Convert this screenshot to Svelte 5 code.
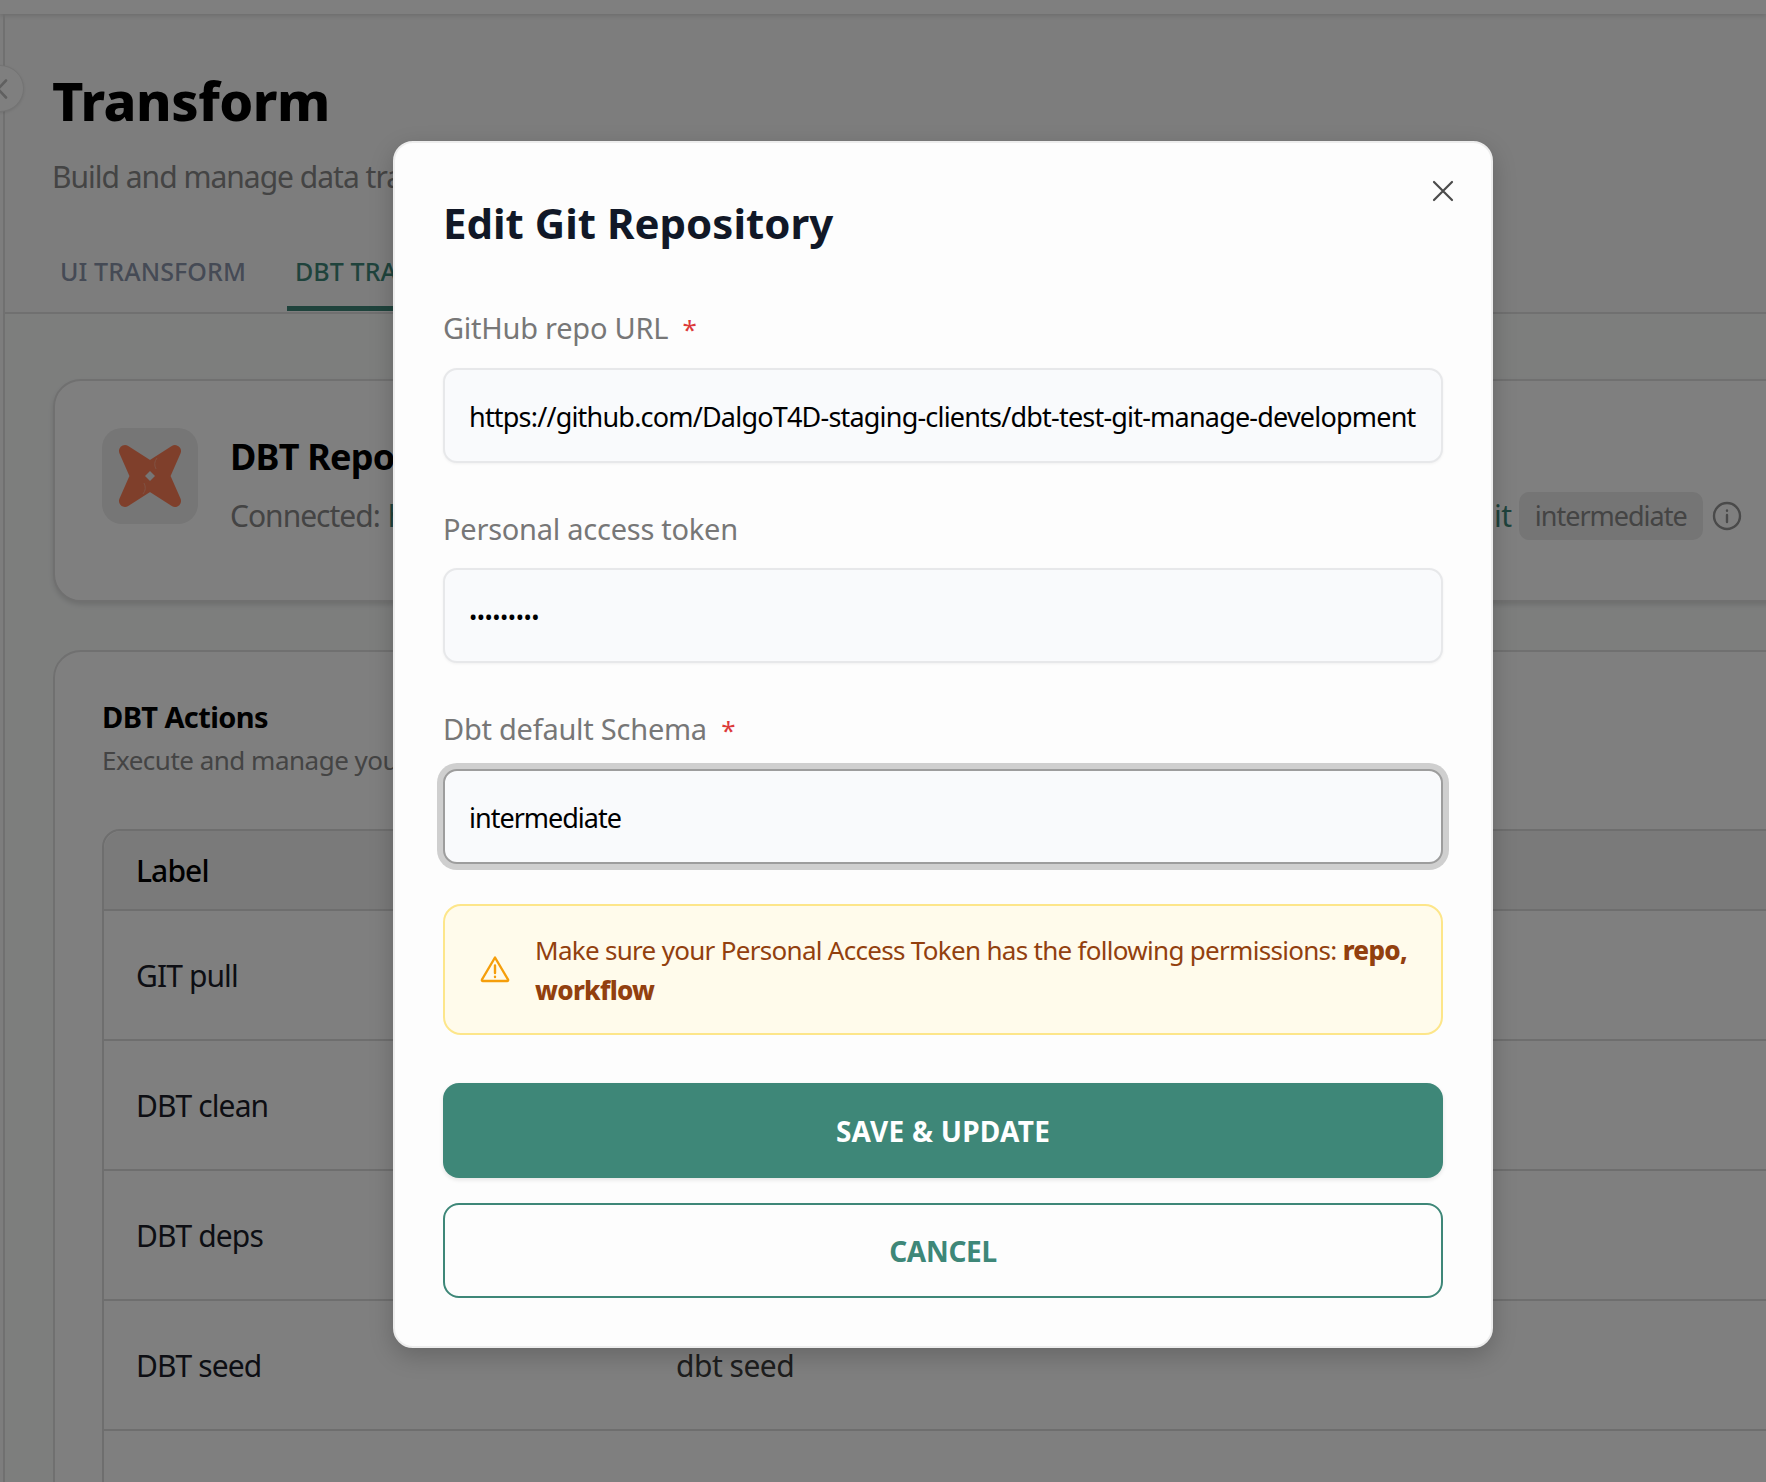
<script>
  const rows = [
    { label: 'GIT pull', command: 'git pull' },
    { label: 'DBT clean', command: 'dbt clean' },
    { label: 'DBT deps', command: 'dbt deps' },
    { label: 'DBT seed', command: 'dbt seed' },
    { label: '', command: '' }
  ];
</script>

<div class="screen">
  <div class="topbar"></div>
  <div class="body">
    <aside class="rail">
      <span class="collapse">
        <svg viewBox="0 0 24 24" width="24" height="24" fill="none" stroke="#c0c0c0" stroke-width="2.6" stroke-linecap="round" stroke-linejoin="round"><path d="M16 3.5L8 12l8 8.5" /></svg>
      </span>
    </aside>
    <main class="main">
      <header class="head">
        <h1>Transform</h1>
        <p>Build and manage data transformations</p>
      </header>
      <nav class="tabs">
        <span class="tab">UI TRANSFORM</span>
        <span class="tab active">DBT TRANSFORM</span>
      </nav>
      <section class="content">
        <div class="card repo">
          <div class="logo">
            <svg viewBox="0 0 64 64" width="64" height="64">
              <path d="M7 7L32 23L57 7L46 32L57 57L32 41L7 57L18 32Z" fill="#ff7f57" stroke="#ff7f57" stroke-width="12" stroke-linejoin="round" />
              <path d="M32 27l5 5-5 5-5-5z" fill="#ececec" />
              <path d="M39 14q-4 5-1 11M25 50q4-5 1-11" fill="none" stroke="#ffa284" stroke-width="1" />
            </svg>
          </div>
          <div class="repo-text">
            <h2>DBT Repo</h2>
            <div class="conn">
              <span class="conn-label">Connected:</span>
              <a class="conn-link">https://github.com/DalgoT4D-staging-clients/dbt-test-git-manage-development.git</a>
              <span class="chip">intermediate</span>
              <svg class="info" viewBox="0 0 30 30" width="30" height="30" fill="none" stroke="#949494" stroke-width="2.4" stroke-linecap="round"><circle cx="15" cy="15" r="13" /><path d="M15 14v7" /><path d="M15 9.5v.2" /></svg>
            </div>
          </div>
        </div>
        <div class="card actions">
          <h3>DBT Actions</h3>
          <p class="sub">Execute and manage your dbt commands</p>
          <div class="table">
            <div class="row thead"><span>Label</span><span></span></div>
            {#each rows as r}
              <div class="row"><span class="lbl">{r.label}</span><span class="cmd">{r.command}</span></div>
            {/each}
          </div>
        </div>
      </section>
    </main>
  </div>

  <div class="backdrop"></div>

  <div class="modal" role="dialog">
    <button class="close" aria-label="Close">
      <svg viewBox="0 0 22 22" width="22" height="22" fill="none" stroke="#4b4b4b" stroke-width="2.2" stroke-linecap="round"><path d="M2 2l18 18M20 2L2 20" /></svg>
    </button>
    <h2 class="title">Edit Git Repository</h2>

    <label class="field">
      <span class="flabel">GitHub repo URL <em>*</em></span>
      <input class="url" type="text" value="https://github.com/DalgoT4D-staging-clients/dbt-test-git-manage-development" />
    </label>
    <label class="field">
      <span class="flabel">Personal access token</span>
      <input class="secret" type="password" value="*********" />
    </label>
    <label class="field">
      <span class="flabel">Dbt default Schema <em>*</em></span>
      <input class="focus" type="text" value="intermediate" />
    </label>

    <div class="alert">
      <svg viewBox="0 0 30 28" width="30" height="28" fill="none" stroke="#f59e0b" stroke-width="2.4" stroke-linecap="round" stroke-linejoin="round">
        <path d="M15 2.5L2 24.5a1 1 0 0 0 .9 1.5h24.2a1 1 0 0 0 .9-1.5z" />
        <path d="M15 10.5v7.5M15 21.8v.2" />
      </svg>
      <p>Make sure your Personal Access Token has the following permissions: <strong>repo, workflow</strong></p>
    </div>

    <button class="btn primary">SAVE &amp; UPDATE</button>
    <button class="btn outline">CANCEL</button>
  </div>
</div>

<style>
  :global(body) {
    margin: 0;
    background: #fff;
  }
  .screen {
    position: relative;
    width: 1766px;
    height: 1482px;
    overflow: hidden;
    background: #fafafa;
    font-family: "Noto Sans", sans-serif;
    color: #000;
  }
  .topbar {
    height: 14px;
    background: #ffffff;
    box-shadow: 0 2px 4px rgba(0, 0, 0, 0.12);
    position: relative;
  }
  .body {
    display: flex;
    height: 1468px;
  }
  .rail {
    width: 3px;
    flex: none;
    border-right: 2px solid #e0e0e0;
    position: relative;
  }
  .collapse {
    position: absolute;
    left: -24px;
    top: 51px;
    width: 48px;
    height: 47px;
    box-sizing: border-box;
    padding-left: 4px;
    border-radius: 50%;
    background: #fff;
    border: 1px solid #e8e8e8;
    box-shadow: 0 1px 3px rgba(0, 0, 0, 0.1);
    display: flex;
    align-items: center;
    justify-content: center;
  }
  .main {
    width: 1900px;
    flex: none;
  }
  .head {
    padding: 56px 0 0 47px;
  }
  .head h1 {
    margin: 0;
    font-size: 54px;
    line-height: 60px;
    font-weight: 800;
    letter-spacing: -0.45px;
  }
  .head p {
    margin: 27px 0 0;
    font-size: 30px;
    line-height: 40px;
    color: #888;
    letter-spacing: -1px;
  }
  .tabs {
    display: flex;
    gap: 33px;
    margin-top: 54px;
    padding-left: 47px;
    border-bottom: 2px solid #e0e0e0;
    height: 61px;
  }
  .tab {
    padding: 0 8px;
    font-size: 25px;
    line-height: 40px;
    font-weight: 500;
    color: #8a94aa;
    height: 60px;
    box-sizing: border-box;
    letter-spacing: 0.1px;
  }
  .tab.active {
    color: #3e8778;
    border-bottom: 5px solid #3e8778;
  }
  .content {
    padding: 65px 0 0 48px;
    background: #fafcfb;
  }
  .card {
    background: #fff;
    border: 2px solid #e0e0e0;
    border-radius: 28px;
    box-sizing: border-box;
  }
  .repo {
    height: 223px;
    padding: 47px;
    display: flex;
    gap: 32px;
    box-shadow: 0 3px 5px rgba(0, 0, 0, 0.12);
  }
  .logo {
    width: 96px;
    height: 96px;
    flex: none;
    border-radius: 20px;
    background: #ececec;
    display: flex;
    align-items: center;
    justify-content: center;
  }
  .repo-text h2 {
    margin: 4px 0 0;
    font-size: 36px;
    line-height: 50px;
    font-weight: 700;
    letter-spacing: -0.8px;
  }
  .conn {
    display: flex;
    align-items: center;
    margin-top: 10px;
    font-size: 30px;
    line-height: 48px;
    letter-spacing: -1px;
  }
  .conn-label {
    color: #888;
  }
  .conn-link {
    color: #3e8778;
    margin-left: 8px;
    width: 1123px;
    white-space: nowrap;
    letter-spacing: -0.5px;
    flex: none;
  }
  .chip {
    margin-left: 8px;
    width: 184px;
    height: 48px;
    background: #ebebeb;
    color: #888;
    border-radius: 10px;
    font-size: 27px;
    letter-spacing: -1px;
    text-align: center;
  }
  .info {
    margin-left: 9px;
  }
  .actions {
    margin-top: 48px;
    padding: 45px 47px;
    height: 1000px;
  }
  .actions h3 {
    margin: 0;
    font-size: 29px;
    line-height: 40px;
    font-weight: 700;
    letter-spacing: -0.6px;
  }
  .sub {
    margin: 4px 0 0;
    font-size: 26px;
    line-height: 38px;
    color: #888;
    letter-spacing: -0.5px;
  }
  .table {
    margin-top: 50px;
    border: 2px solid #dcdcdc;
    border-radius: 18px 0 0 0;
  }
  .row {
    display: grid;
    grid-template-columns: 540px 1fr;
    align-items: center;
    padding-left: 32px;
    height: 130px;
    box-sizing: border-box;
    border-top: 2px solid #dcdcdc;
    font-size: 30px;
    letter-spacing: -0.9px;
  }
  .row.thead {
    height: 78px;
    border-top: 0;
    background: #f5f5f5;
    border-radius: 18px 0 0 0;
    color: #000;
    font-weight: 500;
  }
  .lbl {
    color: #1a1d29;
  }
  .cmd {
    color: #3c3c3c;
    letter-spacing: -0.5px;
  }
  .backdrop {
    position: absolute;
    inset: 0;
    background: rgba(0, 0, 0, 0.5);
  }
  .modal {
    position: absolute;
    left: 393px;
    top: 141px;
    width: 1100px;
    height: 1207px;
    box-sizing: border-box;
    padding: 50px 48px;
    background: #fdfdfd;
    border: 2px solid #ededed;
    border-radius: 20px;
    box-shadow: 0 8px 24px rgba(0, 0, 0, 0.2);
    display: flex;
    flex-direction: column;
  }
  .close {
    position: absolute;
    right: 37px;
    top: 37px;
    background: none;
    border: 0;
    padding: 0;
    display: flex;
  }
  .title {
    margin: 0;
    flex: none;
    font-size: 42px;
    line-height: 60px;
    font-weight: 700;
    color: #111827;
    letter-spacing: 0;
  }
  .field {
    display: flex;
    flex-direction: column;
    flex: none;
    height: 200.5px;
  }
  .title + .field {
    margin-top: 55px;
  }
  .flabel {
    font-size: 29px;
    line-height: 40px;
    color: #777;
    margin-bottom: 19px;
    letter-spacing: -0.25px;
  }
  .flabel em {
    font-style: normal;
    font-size: 26px;
    color: #dc3a3a;
    margin-left: 7px;
  }
  .field input {
    height: 95px;
    box-sizing: border-box;
    border: 2px solid #e7e8ea;
    border-radius: 14px;
    background: #f9fafc;
    padding: 1px 24px 0;
    font: inherit;
    font-size: 27px;
    letter-spacing: -1px;
    color: #000;
    outline: none;
    box-shadow: 0 1px 3px rgba(0, 0, 0, 0.05);
  }
  .field input.url {
    letter-spacing: -0.8px;
  }
  .field input.secret {
    font-size: 22px;
    letter-spacing: -0.5px;
  }
  .field input.focus {
    border-color: #9d9d9d;
    box-shadow: 0 0 0 6px #cfcfcf;
  }
  .alert {
    margin-top: -5.5px;
    flex: none;
    height: 131px;
    box-sizing: border-box;
    border: 2px solid #fde68a;
    border-radius: 18px;
    background: #fffbeb;
    display: flex;
    align-items: center;
    gap: 25px;
    padding: 0 26px 0 35px;
  }
  .alert svg {
    flex: none;
    margin-top: -2px;
  }
  .alert p {
    margin: 0;
    font-size: 26px;
    line-height: 40px;
    color: #92400e;
    letter-spacing: -0.7px;
  }
  .alert strong {
    font-weight: 800;
  }
  .btn {
    height: 95px;
    border-radius: 16px;
    font: inherit;
    font-size: 28px;
    font-weight: 700;
    letter-spacing: -0.3px;
    flex: none;
  }
  .primary {
    margin-top: 48px;
    background: #3e8778;
    color: #fff;
    border: 0;
    letter-spacing: 0.25px;
    box-shadow: 0 2px 4px rgba(0, 0, 0, 0.1);
  }
  .outline {
    margin-top: 25px;
    background: #fdfdfd;
    color: #3e8778;
    border: 2px solid #3e8778;
  }
</style>
